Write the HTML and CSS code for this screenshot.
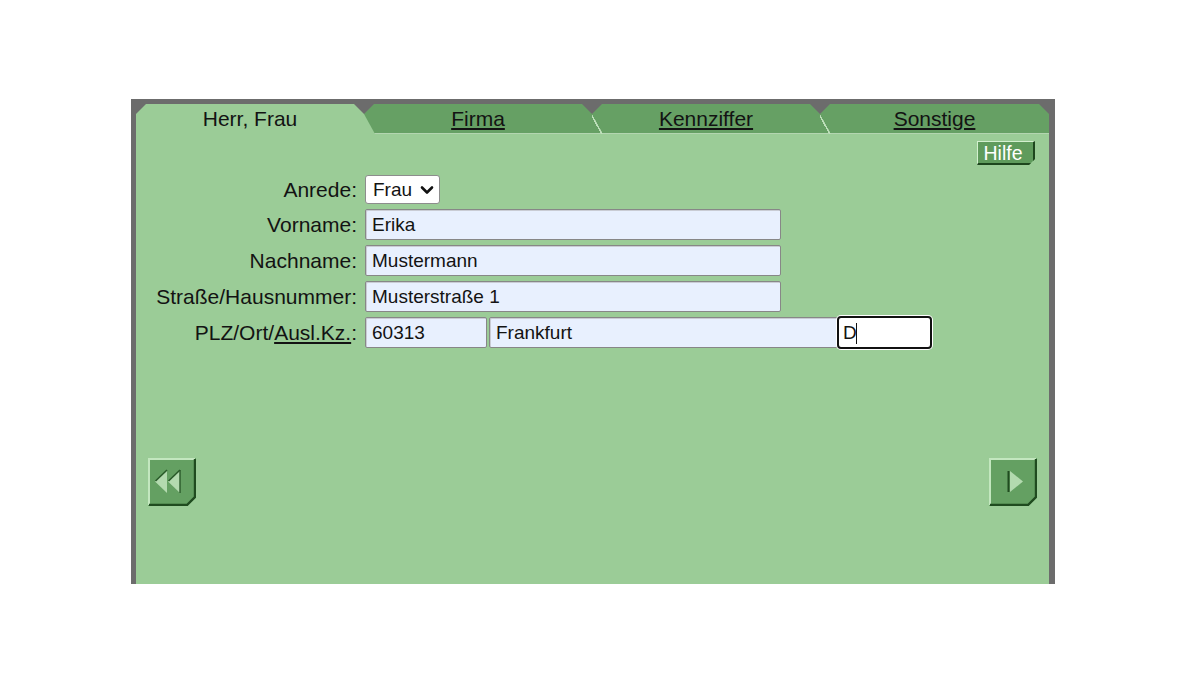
FILE: index.html
```html
<!DOCTYPE html>
<html lang="de">
<head>
<meta charset="utf-8">
<title>Adresse – Herr, Frau</title>
<link rel="stylesheet" href="styles.css">
</head>
<body>
<div class="frame">
  <div class="tabs">
    <div class="tab tab-active">Herr, Frau</div>
    <a class="tab tab-link" href="#">Firma</a>
    <a class="tab tab-link" href="#">Kennziffer</a>
    <a class="tab tab-link tab-last" href="#">Sonstige</a>
  </div>
  <div class="panel">
    <div class="toolbar">
      <button class="help" type="button">Hilfe</button>
    </div>
    <form class="form">
      <label class="lbl" for="anrede">Anrede:</label>
      <div class="select-wrap">
        <select id="anrede" class="select">
          <option>Frau</option>
          <option>Herr</option>
        </select>
        <svg class="chevron" width="14" height="10" viewBox="0 0 14 10" aria-hidden="true">
          <path d="M2 2.5 L7 7.5 L12 2.5" fill="none" stroke="#111" stroke-width="2.6" stroke-linecap="round" stroke-linejoin="round"/>
        </svg>
      </div>

      <label class="lbl" for="vorname">Vorname:</label>
      <input id="vorname" class="field field-wide" type="text" value="Erika">

      <label class="lbl" for="nachname">Nachname:</label>
      <input id="nachname" class="field field-wide" type="text" value="Mustermann">

      <label class="lbl" for="strasse">Straße/Hausnummer:</label>
      <input id="strasse" class="field field-wide" type="text" value="Musterstraße 1">

      <label class="lbl" for="plz">PLZ/Ort/<a class="lbl-link" href="#">Ausl.Kz.</a>:</label>
      <div class="place">
        <input id="plz" class="field field-plz" type="text" value="60313">
        <input class="field field-ort" type="text" value="Frankfurt">
        <span class="kz-wrap">
          <input class="field field-kz" type="text" value="D">
          <span class="caret"></span>
        </span>
      </div>
    </form>
    <div class="nav">
      <button class="nav-btn" type="button" aria-label="Zurück">
        <svg width="48" height="48" viewBox="0 0 48 48">
          <polygon points="0,0 48,0 48,39 39,48 0,48" fill="#64a062"/>
          <polyline points="1,47 1,1 47,1" fill="none" stroke="#c3e7bf" stroke-width="2"/>
          <polyline points="47,1 47,39 39,47 1,47" fill="none" stroke="#1f4b1f" stroke-width="2.4"/>
          <polygon points="7,23.5 19,12 19,35" fill="#b3daaf"/>
          <polygon points="20,23.5 32,12 32,35" fill="#b3daaf"/>
          <line x1="7.5" y1="23" x2="19" y2="12" stroke="#2a5a2a" stroke-width="1.6"/>
          <line x1="20.5" y1="23" x2="32" y2="12" stroke="#2a5a2a" stroke-width="1.6"/>
          <line x1="32" y1="12" x2="32" y2="35" stroke="#2a5a2a" stroke-width="1.4"/>
        </svg>
      </button>
      <button class="nav-btn" type="button" aria-label="Weiter">
        <svg width="48" height="48" viewBox="0 0 48 48">
          <polygon points="0,0 48,0 48,39 39,48 0,48" fill="#64a062"/>
          <polyline points="1,47 1,1 47,1" fill="none" stroke="#c3e7bf" stroke-width="2"/>
          <polyline points="47,1 47,39 39,47 1,47" fill="none" stroke="#1f4b1f" stroke-width="2.4"/>
          <polygon points="21,13 34,23.5 21,34" fill="#b3daaf"/>
          <line x1="19.5" y1="13" x2="19.5" y2="34" stroke="#1f4b1f" stroke-width="2"/>
        </svg>
      </button>
    </div>
  </div>
</div>
</body>
</html>
```

FILE: styles.css
```css
html, body {
  margin: 0;
  padding: 0;
  background: #ffffff;
}

body {
  font-family: "Liberation Sans", Arial, sans-serif;
  color: #131313;
}

/* gray window frame around the tab sheet */
.frame {
  box-sizing: border-box;
  width: 924px;
  height: 485px;
  margin: 99px 0 0 131px;
  padding: 5px 6px 0 5px;
  background: #6c6c6c;
  display: flex;
  flex-direction: column;
  overflow: hidden;
}

/* ---------- tab strip ---------- */
.tabs {
  display: flex;
  height: 30px;
  flex: 0 0 30px;
}

.tab {
  position: relative;
  box-sizing: border-box;
  flex: 0 0 239px;
  width: 239px;
  height: 30px;
  margin-right: -11px;
  padding-right: 11px;
  display: flex;
  align-items: center;
  justify-content: center;
  font-size: 21px;
  color: #131313;
  text-decoration: none;
  clip-path: polygon(0 10px, 10px 0, 218px 0, 228px 10px, 239px 30px, 0 30px);
}

.tab:nth-child(1) { z-index: 4; }
.tab:nth-child(2) { z-index: 3; }
.tab:nth-child(3) { z-index: 2; }
.tab:nth-child(4) { z-index: 1; }

.tab-active {
  background: #9bcc97;
}

.tab-link {
  background: #66a064;
  border-bottom: 1px solid #b3d5b0;
  text-decoration: underline;
  text-underline-offset: 2px;
}

/* light bevel along the slanted right edge of a back tab */
.tab-link::after {
  content: "";
  position: absolute;
  left: 228px;
  top: 10px;
  width: 11px;
  height: 20px;
  background: linear-gradient(to top right,
    transparent calc(50% - 1.6px),
    #bfe0bb calc(50% - 1.6px),
    #bfe0bb 50%,
    transparent 50%);
}

.tab-last {
  flex: 0 0 229px;
  width: 229px;
  margin-right: 0;
  padding-right: 0;
  clip-path: polygon(0 10px, 10px 0, 219px 0, 229px 10px, 229px 30px, 0 30px);
}

.tab-last::after {
  display: none;
}

/* ---------- sheet body ---------- */
.panel {
  flex: 1;
  background: #9bcc97;
  display: flex;
  flex-direction: column;
}

.toolbar {
  display: flex;
  justify-content: flex-end;
  padding: 7px 14px 0 0;
}

.help {
  box-sizing: border-box;
  width: 58px;
  height: 24px;
  padding: 0 9px 0 4px;
  margin: 0;
  font-family: "Liberation Sans", Arial, sans-serif;
  font-size: 19.5px;
  line-height: 20px;
  color: #ffffff;
  background: #5f9b5c;
  border-style: solid;
  border-width: 1px 2px 2px 1px;
  border-color: #d3f0cf #1d461d #1d461d #d3f0cf;
  clip-path: polygon(0 0, 100% 0, 100% calc(100% - 6px), calc(100% - 6px) 100%, 0 100%);
}

/* ---------- address form ---------- */
.form {
  display: grid;
  grid-template-columns: 221px 1fr;
  column-gap: 8px;
  row-gap: 5px;
  margin: 10px 0 0 0;
  align-items: center;
}

.lbl {
  text-align: right;
  font-size: 21px;
  line-height: 24px;
  color: #131313;
  white-space: nowrap;
}

.lbl-link {
  color: #131313;
  text-decoration: underline;
}

.select-wrap {
  position: relative;
  width: 75px;
  height: 29px;
}

.select {
  appearance: none;
  -webkit-appearance: none;
  box-sizing: border-box;
  width: 100%;
  height: 100%;
  margin: 0;
  padding: 0 0 0 7px;
  font-family: "Liberation Sans", Arial, sans-serif;
  font-size: 19px;
  color: #131313;
  background: #ffffff;
  border: 1px solid #8d8d8d;
  border-radius: 3px;
}

.chevron {
  position: absolute;
  right: 6px;
  top: 10px;
  pointer-events: none;
}

.field {
  box-sizing: border-box;
  height: 31px;
  margin: 0;
  padding: 0 0 0 6px;
  font-family: "Liberation Sans", Arial, sans-serif;
  font-size: 19px;
  color: #131313;
  background: #e8f0fe;
  border: 1px solid #878787;
  border-radius: 2px;
  box-shadow: inset 1px 1px 0 #c9ccd4;
  outline: none;
}

.field-wide {
  width: 416px;
}

.place {
  display: flex;
  align-items: center;
}

.field-plz {
  width: 122px;
  margin-right: 2px;
}

.field-ort {
  width: 349px;
}

.kz-wrap {
  position: relative;
  display: block;
  margin-left: -1px;
}

.field-kz {
  display: block;
  width: 95px;
  height: 33px;
  margin: -1px 0;
  padding-left: 4px;
  background: #ffffff;
  border: 2px solid #111111;
  border-radius: 4px;
  box-shadow: 0 0 0 1px #ffffff;
}

/* text cursor after the typed letter */
.caret {
  position: absolute;
  left: 19px;
  top: 6px;
  width: 1px;
  height: 21px;
  background: #111111;
}

/* ---------- paging buttons ---------- */
.nav {
  display: flex;
  justify-content: space-between;
  margin-top: 110px;
  padding: 0 12px;
}

.nav-btn {
  display: block;
  width: 48px;
  height: 48px;
  padding: 0;
  margin: 0;
  border: 0;
  background: transparent;
}

.nav-btn svg {
  display: block;
}
```
